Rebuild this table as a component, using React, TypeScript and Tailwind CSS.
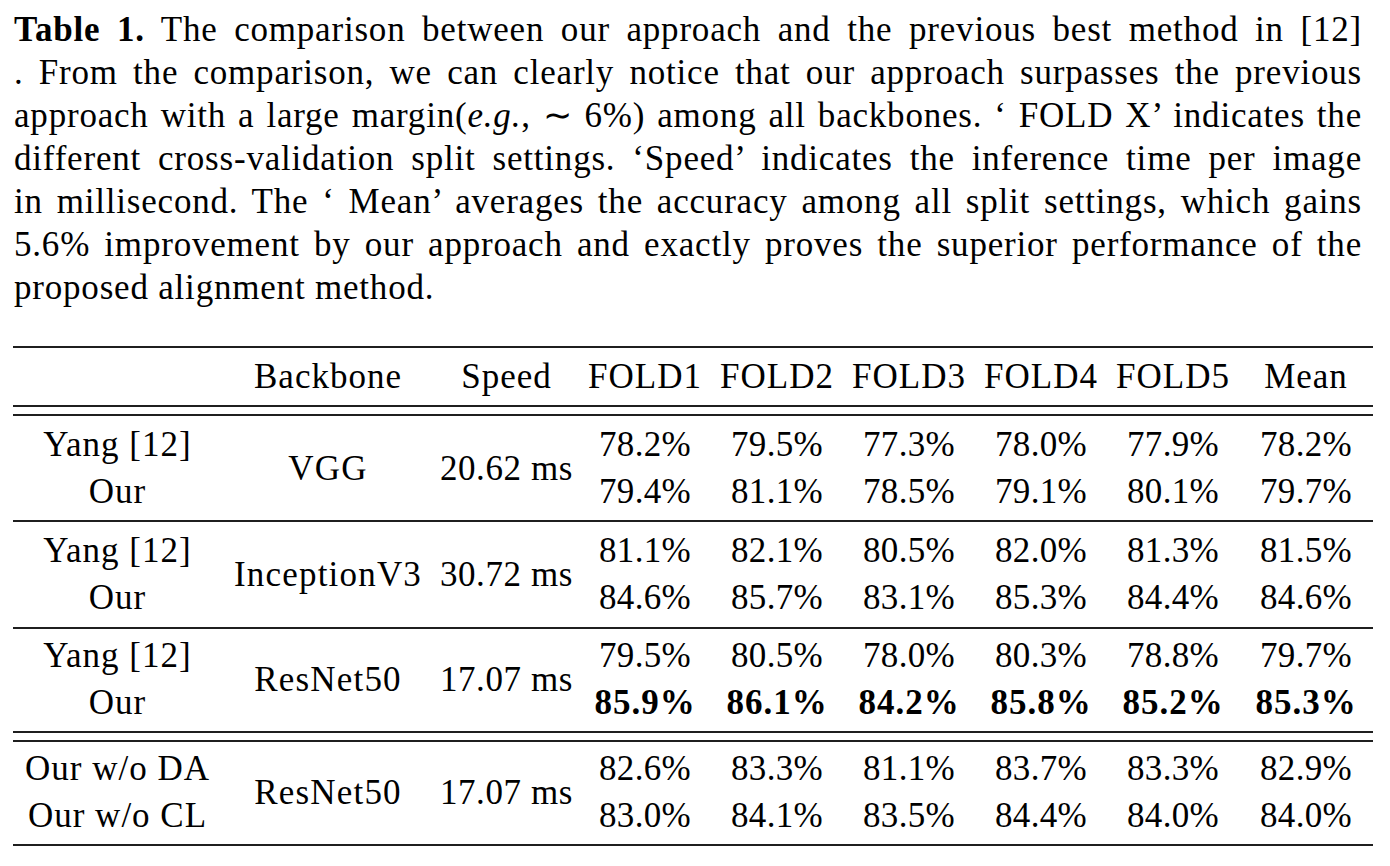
import React from 'react';

type Group = {
  methods: [string, string];
  backbone: string;
  speed: string;
  rows: [string[], string[]];
  boldSecond?: boolean;
  pad: string;
};

const cols = 'grid grid-cols-[209px_212px_145px_132px_132px_132px_132px_132px_134px]';

const groups: Group[] = [
  {
    methods: ['Yang [12]', 'Our'],
    backbone: 'VGG',
    speed: '20.62 ms',
    rows: [
      ['78.2%', '79.5%', '77.3%', '78.0%', '77.9%', '78.2%'],
      ['79.4%', '81.1%', '78.5%', '79.1%', '80.1%', '79.7%'],
    ],
    pad: 'pt-[5px] pb-[5px]',
  },
  {
    methods: ['Yang [12]', 'Our'],
    backbone: 'InceptionV3',
    speed: '30.72 ms',
    rows: [
      ['81.1%', '82.1%', '80.5%', '82.0%', '81.3%', '81.5%'],
      ['84.6%', '85.7%', '83.1%', '85.3%', '84.4%', '84.6%'],
    ],
    pad: 'pt-[5px] pb-[6px]',
  },
  {
    methods: ['Yang [12]', 'Our'],
    backbone: 'ResNet50',
    speed: '17.07 ms',
    rows: [
      ['79.5%', '80.5%', '78.0%', '80.3%', '78.8%', '79.7%'],
      ['85.9%', '86.1%', '84.2%', '85.8%', '85.2%', '85.3%'],
    ],
    boldSecond: true,
    pad: 'pt-[3px] pb-[5px]',
  },
];

const ablation: Group = {
  methods: ['Our w/o DA', 'Our w/o CL'],
  backbone: 'ResNet50',
  speed: '17.07 ms',
  rows: [
    ['82.6%', '83.3%', '81.1%', '83.7%', '83.3%', '82.9%'],
    ['83.0%', '84.1%', '83.5%', '84.4%', '84.0%', '84.0%'],
  ],
  pad: 'pt-[3px] pb-[5px]',
};

const Rule = () => <div className="h-[2px] bg-[#1f1f1f]" />;

const GroupRows = ({ g }: { g: Group }) => (
  <div className={`${cols} ${g.pad}`}>
    <div className="flex flex-col items-center tracking-[1px]">
      <span>{g.methods[0]}</span>
      <span>{g.methods[1]}</span>
    </div>
    <div className="flex items-center justify-center tracking-[1.2px]">{g.backbone}</div>
    <div className="flex items-center justify-center tracking-[0.6px]">{g.speed}</div>
    {g.rows[0].map((v, i) => (
      <div key={i} className="flex flex-col items-center tracking-[0.3px]">
        <span>{v}</span>
        <span className={g.boldSecond ? 'font-bold tracking-[1px]' : ''}>{g.rows[1][i]}</span>
      </div>
    ))}
  </div>
);

const captionLines: React.ReactNode[] = [
  <>
    <span className="font-bold">Table 1.</span> The comparison between our approach and the previous best method in [12]
  </>,
  <>. From the comparison, we can clearly notice that our approach surpasses the previous</>,
  <>
    approach with a large margin(<i>e.g.</i>, ∼&nbsp;6%) among all backbones. ‘ FOLD X’ indicates the
  </>,
  <>different cross-validation split settings. ‘Speed’ indicates the inference time per image</>,
  <>in millisecond. The ‘ Mean’ averages the accuracy among all split settings, which gains</>,
  <>5.6% improvement by our approach and exactly proves the superior performance of the</>,
];

export default function App() {
  return (
    <div className="w-[1390px] h-[866px] bg-white text-black font-['Liberation_Serif','Times_New_Roman',serif] overflow-hidden">
      {/* caption */}
      <div className="pl-[14px] w-[1362px] pt-[8px] text-[35px] leading-[43px] tracking-[0.8px]">
        {captionLines.map((line, i) => (
          <div key={i} className="text-justify [text-align-last:justify]">
            {line}
          </div>
        ))}
        <div>proposed alignment method.</div>
      </div>

      {/* table */}
      <div className="ml-[13px] w-[1360px] mt-[37px] text-[35px] leading-[47px]">
        <Rule />
        <div className={`${cols} h-[57px] items-center tracking-[1px]`}>
          <div />
          <div className="text-center">Backbone</div>
          <div className="text-center">Speed</div>
          <div className="text-center">FOLD1</div>
          <div className="text-center">FOLD2</div>
          <div className="text-center">FOLD3</div>
          <div className="text-center">FOLD4</div>
          <div className="text-center">FOLD5</div>
          <div className="text-center">Mean</div>
        </div>
        <Rule />
        <div className="h-[7px]" />
        <Rule />
        <GroupRows g={groups[0]} />
        <Rule />
        <GroupRows g={groups[1]} />
        <Rule />
        <GroupRows g={groups[2]} />
        <Rule />
        <div className="h-[7px]" />
        <Rule />
        <GroupRows g={ablation} />
        <Rule />
      </div>
    </div>
  );
}
